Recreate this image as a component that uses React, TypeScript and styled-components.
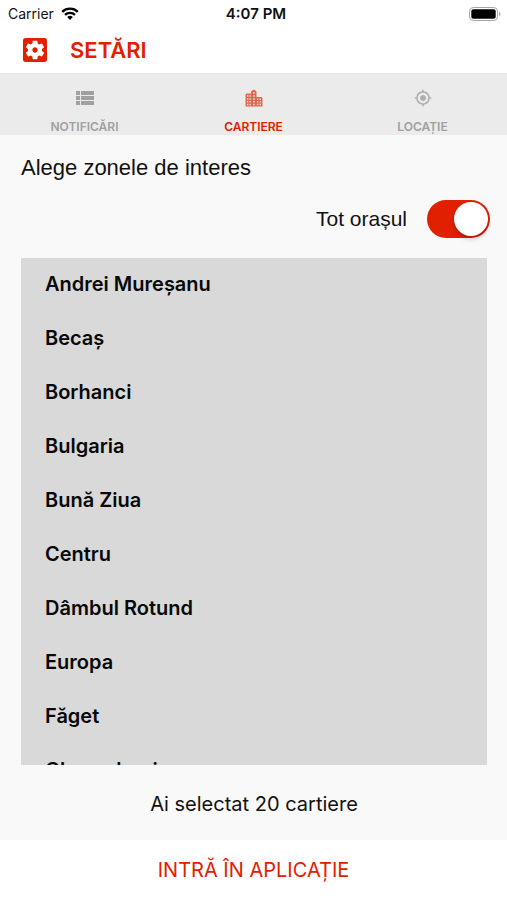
import React, { useState } from "react";
import styled, { createGlobalStyle } from "styled-components";
import {
  MdSettingsApplications,
  MdViewList,
  MdMyLocation,
} from "react-icons/md";

const RED = "#e12000";
const SYSTEM = 'Inter, "Liberation Sans", sans-serif';
const HELVETICA = '"Liberation Sans", Arial, sans-serif';

const GlobalStyle = createGlobalStyle`
  *, *::before, *::after { box-sizing: border-box; }
  body { margin: 0; background: #fff; font-family: ${SYSTEM}; color: #111; }
  button { font: inherit; border: 0; padding: 0; background: none; cursor: pointer; }
`;

const Screen = styled.div`
  display: flex;
  flex-direction: column;
  height: 100vh;
  background: #fff;
`;

const StatusBar = styled.div`
  display: grid;
  grid-template-columns: 1fr auto 1fr;
  align-items: center;
  height: 27px;
  padding: 0 6px 0 8px;
  font-size: 14px;
  line-height: 18px;
`;

const Carrier = styled.div`
  display: flex;
  align-items: center;
  gap: 7px;
`;

const Clock = styled.time`
  padding-left: 3px;
  font-size: 15px;
  font-weight: 600;
`;

const BatteryIcon = styled.svg`
  justify-self: end;
`;

const Header = styled.header`
  display: flex;
  align-items: center;
  gap: 19px;
  height: 46px;
  padding: 0 19px;
  color: ${RED};
`;

const Title = styled.h1`
  margin: 0;
  font-size: 22px;
  line-height: 28px;
  font-weight: 600;
`;

const Tabs = styled.nav`
  display: grid;
  grid-template-columns: repeat(3, 1fr);
  height: 62px;
  background: #ebebeb;
  border-top: 1px solid #e4e4e4;
`;

const Tab = styled.button<{ $active: boolean }>`
  display: flex;
  flex-direction: column;
  align-items: center;
  justify-content: flex-end;
  gap: 9px;
  font-size: 12px;
  line-height: 16px;
  font-weight: 600;
  color: ${(p) => (p.$active ? RED : "#a0a0a0")};
`;

const TabIcon = styled.span<{ $opacity: number }>`
  display: flex;
  align-items: center;
  height: 24px;
  opacity: ${(p) => p.$opacity};
`;

const Content = styled.main`
  display: flex;
  flex-direction: column;
  flex: 1;
  min-height: 0;
  padding: 20px 20px 0 21px;
  background: #f9f9f9;
`;

const Prompt = styled.h2`
  margin: 0;
  font-family: ${HELVETICA};
  font-size: 22px;
  line-height: 26px;
  font-weight: 400;
`;

const SwitchRow = styled.label`
  display: flex;
  align-items: center;
  align-self: flex-end;
  gap: 20px;
  margin: 19px -3px 20px 0;
  font-family: ${HELVETICA};
  font-size: 21px;
  line-height: 26px;
`;

const Switch = styled.input`
  appearance: none;
  display: flex;
  align-items: center;
  width: 63px;
  height: 38px;
  margin: 0;
  padding: 2px;
  border-radius: 19px;
  background: #d8d8d8;
  cursor: pointer;

  &::before {
    content: "";
    width: 34px;
    height: 34px;
    border-radius: 50%;
    background: #fff;
    box-shadow: 0 3px 5px rgba(0, 0, 0, 0.2);
  }

  &:checked {
    justify-content: flex-end;
    background: ${RED};
  }
`;

const AreaList = styled.ul`
  display: flex;
  flex-direction: column;
  gap: 26px;
  flex: 1;
  min-height: 0;
  margin: 0;
  padding: 12px 24px;
  list-style: none;
  overflow-y: auto;
  scrollbar-width: none;
  background: #d9d9d9;
`;

const Area = styled.li`
  font-size: 20px;
  line-height: 28px;
  font-weight: 600;
  color: #080808;
`;

const Summary = styled.p`
  margin: 0;
  padding: 25px 0 22px;
  text-align: center;
  font-size: 20px;
  line-height: 28px;
`;

const Footer = styled.footer`
  display: flex;
  height: 60px;
  background: #fff;
`;

const EnterButton = styled.button`
  flex: 1;
  font-size: 20px;
  line-height: 28px;
  color: ${RED};
`;

function CityIcon() {
  return (
    <svg width="18" height="18" viewBox="0 0 18 18" aria-hidden="true">
      <path
        fill="currentColor"
        fillRule="evenodd"
        d="M.5 5.500 1.500 4.500H6V2.500L8.200.8h1.300l2 1.700v5.500H16.500l1 1V17.500H.5z
           M2 6.300v1.500h1.300V6.300z M4.500 6.300v1.500h1.300V6.300z
           M2 9.200v1.500h1.300V9.200z M4.500 9.200v1.500h1.300V9.200z
           M2 12v1.500h1.300V12z M4.500 12v1.500h1.300V12z
           M2 14.800v1.400h1.300v-1.400z M4.500 14.800v1.400h1.300v-1.400z
           M8.200 3.300v1.500h1.500V3.300z M8.200 6.300v1.500h1.500V6.300z
           M8.200 9.200v1.500h1.500V9.200z M8.200 12v1.500h1.500V12z M8.200 14.800v1.400h1.500v-1.400z
           M12 9.500v1.400h1.300V9.500z M14.700 9.500v1.400H16V9.500z
           M12 12.200v1.300h1.300v-1.300z M14.700 12.200v1.300H16v-1.300z
           M12 14.800v1.400h1.300v-1.400z M14.700 14.800v1.400H16v-1.400z"
      />
    </svg>
  );
}

const tabs = [
  { label: "NOTIFICĂRI", icon: <MdViewList size={24} />, opacity: 1 },
  { label: "CARTIERE", icon: <CityIcon />, opacity: 0.65 },
  { label: "LOCAȚIE", icon: <MdMyLocation size={18} />, opacity: 0.8 },
];

const areas = [
  "Andrei Mureșanu",
  "Becaș",
  "Borhanci",
  "Bulgaria",
  "Bună Ziua",
  "Centru",
  "Dâmbul Rotund",
  "Europa",
  "Făget",
  "Gheorgheni",
];

export default function App() {
  const [activeTab, setActiveTab] = useState("CARTIERE");
  const [wholeCity, setWholeCity] = useState(true);

  return (
    <>
      <GlobalStyle />
      <Screen>
        <StatusBar>
          <Carrier>
            <span>Carrier</span>
            <svg width="18" height="13" viewBox="0 0 18 13" aria-hidden="true">
              <g fill="none" stroke="#000" strokeWidth="2.3">
                <path d="M1.2 4.8a11.2 11.2 0 0 1 15.6 0" />
                <path d="M4 7.9a7.2 7.2 0 0 1 10 0" />
              </g>
              <path d="M6.2 10.1a4 4 0 0 1 5.6 0L9 12.9z" />
            </svg>
          </Carrier>
          <Clock>4:07 PM</Clock>
          <BatteryIcon width="32" height="14" viewBox="0 0 32 14" aria-hidden="true">
            <rect x="0.5" y="0.5" width="28" height="13" rx="3.8" fill="#fff" stroke="#a4a4a4" />
            <rect x="2.3" y="2.3" width="24.4" height="9.4" rx="2" fill="#000" />
            <path d="M30 5q1.600 .6 1.600 2t-1.600 2z" fill="#a4a4a4" />
          </BatteryIcon>
        </StatusBar>

        <Header>
          <MdSettingsApplications size={32} aria-hidden="true" />
          <Title>SETĂRI</Title>
        </Header>

        <Tabs>
          {tabs.map(({ label, icon, opacity }) => {
            const active = label === activeTab;
            return (
              <Tab
                key={label}
                type="button"
                $active={active}
                aria-current={active ? "page" : undefined}
                onClick={() => setActiveTab(label)}
              >
                <TabIcon $opacity={opacity}>{icon}</TabIcon>
                {label}
              </Tab>
            );
          })}
        </Tabs>

        <Content>
          <Prompt>Alege zonele de interes</Prompt>
          <SwitchRow htmlFor="whole-city">
            Tot orașul
            <Switch
              id="whole-city"
              type="checkbox"
              role="switch"
              checked={wholeCity}
              onChange={(e) => setWholeCity(e.target.checked)}
            />
          </SwitchRow>
          <AreaList>
            {areas.map((area) => (
              <Area key={area}>{area}</Area>
            ))}
          </AreaList>
          <Summary>Ai selectat 20 cartiere</Summary>
        </Content>

        <Footer>
          <EnterButton type="button">INTRĂ ÎN APLICAȚIE</EnterButton>
        </Footer>
      </Screen>
    </>
  );
}
